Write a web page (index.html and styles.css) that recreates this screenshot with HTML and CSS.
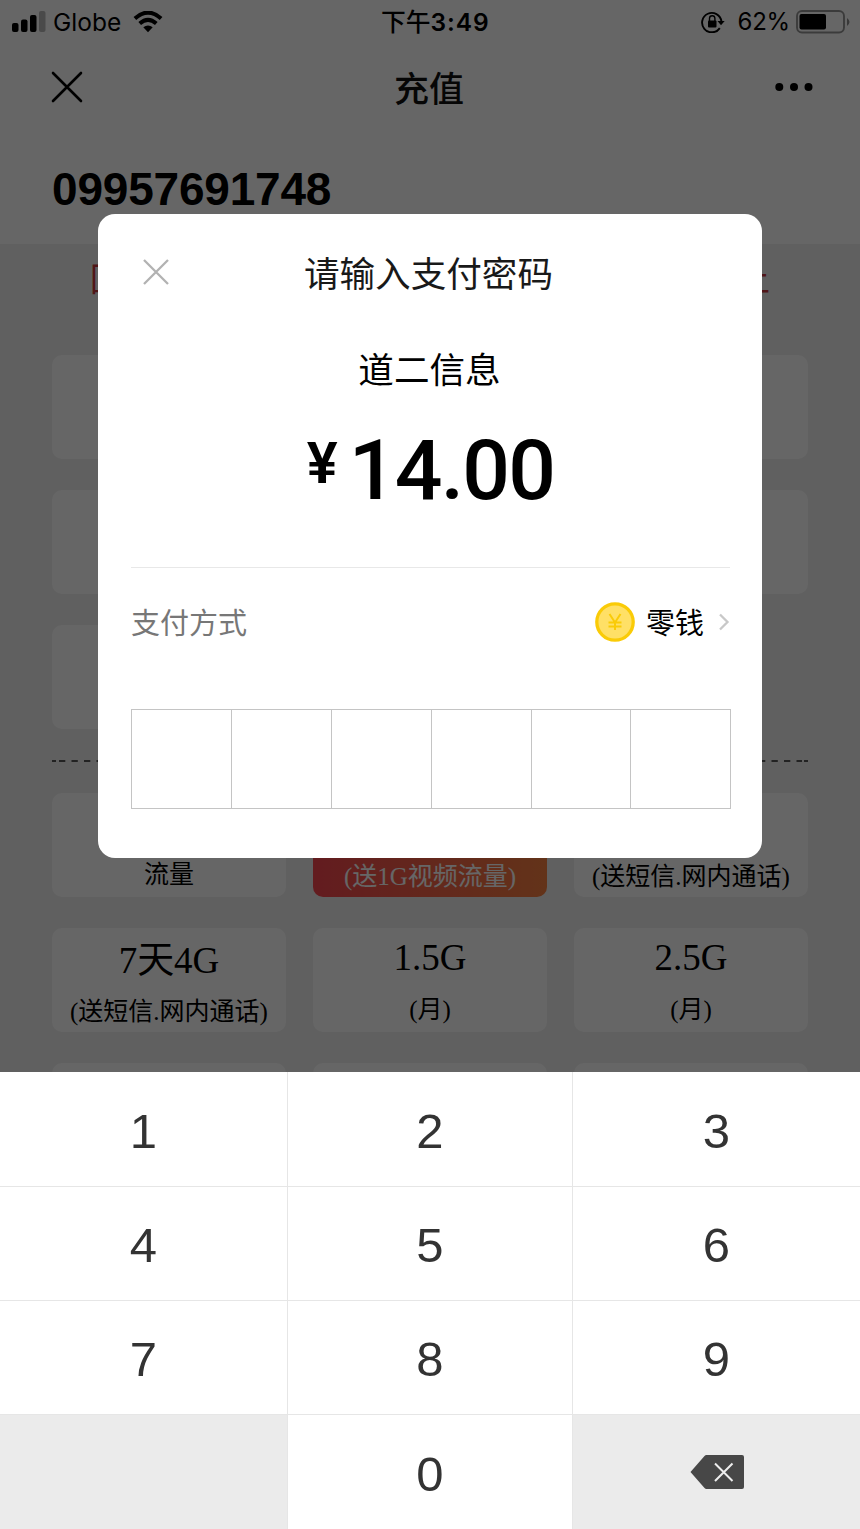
FILE: index.html
```html
<!DOCTYPE html>
<html lang="zh-CN">
<head>
<meta charset="utf-8">
<title>充值</title>
<link rel="stylesheet" href="styles.css">
</head>
<body>
<div class="screen">
  <div class="page">
    <header class="top">
      <div class="status">
        <div class="status-left">
          <svg width="34" height="22" viewBox="0 0 34 22"><rect x="0" y="12" width="6.5" height="9" rx="2"/><rect x="9" y="8.500" width="6.500" height="12.500" rx="2"/><rect x="18" y="4" width="6.500" height="17" rx="2"/><rect x="27" y="0" width="6.500" height="21" rx="2" opacity=".28"/></svg>
          <span class="carrier">Globe</span>
          <svg width="30" height="22" viewBox="0 0 30 22"><g fill="none" stroke="#000" stroke-width="4"><path d="M1.900 7.400Q15-4.200 28.100 7.400"/><path d="M6.700 12.600Q15 5.300 23.300 12.600"/></g><path d="M10.300 16.200Q15 12.800 19.700 16.200L15 21.300Z"/></svg>
        </div>
        <div class="clock">下午<b>3:49</b></div>
        <div class="status-right">
          <svg width="24" height="22" viewBox="0 0 24 22"><path d="M18.800 17.100A9.700 9.700 0 1 1 20.400 10.200" fill="none" stroke="#000" stroke-width="1.900"/><path d="M16.500 10h7.200L20 14.200Z"/><rect x="7" y="9.500" width="8.500" height="7" rx="1"/><path d="M8.500 10V7.500a2.700 2.700 0 0 1 5.400 0V10" fill="none" stroke="#000" stroke-width="1.400"/></svg>
          <span class="percent">62%</span>
          <svg class="battery" width="54" height="24" viewBox="0 0 54 24"><rect x="1" y="1" width="47" height="21.500" rx="5" fill="none" stroke="#000" stroke-opacity=".42" stroke-width="1.900"/><rect x="3.500" y="4" width="26.500" height="15.500" rx="2"/><path d="M51 8q5 4 0 8z" opacity=".45"/></svg>
        </div>
      </div>
      <nav class="nav">
        <svg width="32" height="32" viewBox="0 0 32 32"><path d="M2 2 30 30M30 2 2 30" stroke="#000" stroke-width="2.600" stroke-linecap="round"/></svg>
        <h1 class="nav-title">充值</h1>
        <svg width="38" height="10" viewBox="0 0 38 10"><circle cx="4.300" cy="5" r="4"/><circle cx="19" cy="5" r="4"/><circle cx="33.500" cy="5" r="4"/></svg>
      </nav>
      <div class="phone">09957691748</div>
    </header>
    <main class="plans">
      <div class="notice"><span>回</span><span>上</span></div>
      <div class="grid">
        <div class="card"></div><div class="card"></div><div class="card"></div>
        <div class="card"></div><div class="card"></div><div class="card"></div>
        <div class="card"></div><div class="card"></div>
      </div>
      <svg class="dash" width="756" height="2" viewBox="0 0 756 2"><path d="M0 1H4M752 1H756" stroke="#555" stroke-width="2"/><path d="M7 1H750" stroke="#555" stroke-width="2" stroke-dasharray="6.300 6.200"/></svg>
      <div class="grid">
        <div class="card low"><div class="sub">流量</div></div>
        <div class="card low hot"><div class="sub">(送1G视频流量)</div></div>
        <div class="card low"><div class="sub">(送短信.网内通话)</div></div>
        <div class="card cjk"><div class="name">7天4G</div><div class="sub">(送短信.网内通话)</div></div>
        <div class="card"><div class="name">1.5G</div><div class="sub">(月)</div></div>
        <div class="card"><div class="name">2.5G</div><div class="sub">(月)</div></div>
        <div class="card"></div><div class="card"></div><div class="card"></div>
      </div>
    </main>
  </div>
  <div class="mask"></div>
  <section class="dialog">
    <div class="dialog-head">
      <svg width="26" height="26" viewBox="0 0 26 26"><path d="M1 1 25 25M25 1 1 25" stroke="#b2b2b2" stroke-width="2.300"/></svg>
      <h2 class="dialog-title">请输入支付密码</h2>
    </div>
    <div class="payee">道二信息</div>
    <div class="amount"><span class="yen">¥</span><span class="sum">14.00</span></div>
    <div class="method">
      <span class="method-label">支付方式</span>
      <svg width="40" height="40" viewBox="0 0 40 40"><circle cx="20" cy="20" r="18.200" fill="#ffe066" stroke="#facb07" stroke-width="3.300"/><path d="M14.500 12 20 20.500 25.500 12M20 20.500V28M13.500 20.500H26.500M13.500 24.500H26.500" fill="none" stroke="#facb07" stroke-width="2"/></svg>
      <span class="method-name">零钱</span>
      <svg width="12" height="18" viewBox="0 0 12 18"><path d="M2 1.500 9.500 9 2 16.500" fill="none" stroke="#c8c8c8" stroke-width="2.300"/></svg>
    </div>
    <div class="pin"><i></i><i></i><i></i><i></i><i></i><i></i></div>
  </section>
  <div class="keypad">
    <div>1</div><div>2</div><div>3</div>
    <div>4</div><div>5</div><div>6</div>
    <div>7</div><div>8</div><div>9</div>
    <div class="gray"></div><div>0</div>
    <div class="gray"><svg width="54" height="34" viewBox="0 0 54 34"><path d="M.5 17 14.500 1Q15.300 0 16.500 0H52Q54 0 54 2V32Q54 34 52 34H16.500Q15.300 34 14.500 33Z" fill="#474747"/><path d="M25 8.500 42.500 26M42.500 8.500 25 26" stroke="#eee" stroke-width="2"/></svg></div>
  </div>
</div>
</body>
</html>
```
FILE: styles.css
```css
* { box-sizing: border-box; }
body { margin: 0; font-family: "Liberation Sans", "Noto Sans CJK SC", sans-serif; color: #000; }
svg { display: block; flex: none; }
h1, h2 { margin: 0; font-weight: 400; }
.screen { position: relative; width: 860px; height: 1529px; overflow: hidden; background: #f0f0f0; }
.top { height: 244px; background: #fff; }
.status { height: 44px; padding: 0 0 0 12px; display: grid; grid-template-columns: 369px 1fr 300px; align-items: center; font: 25px/44px Inter, "Noto Sans CJK SC", sans-serif; }
.status-left, .status-right { display: flex; align-items: center; height: 42px; }
.carrier { width: 80px; padding: 0 0 1px 7px; font-size: 24.500px; line-height: 42px; margin-right: 7px; }
.status-right { justify-content: flex-end; }
.percent { margin: 0 6px 0 13px; font-size: 24px; letter-spacing: -.2px; line-height: 42px; }
.battery { margin: 0 10px 1px 0; }
.clock { font-weight: 500; font-size: 24.800px; white-space: nowrap; }
.clock b { font-weight: 600; font-size: 24.500px; letter-spacing: .9px; }
.nav { height: 86px; padding: 0 47px 0 51px; display: flex; align-items: center; justify-content: space-between; }
.nav-title { font: 500 35px/84px "Noto Sans CJK SC", sans-serif; color: #111; }
.phone { padding: 31px 52px 0; font-weight: 700; font-size: 46px; letter-spacing: -.2px; line-height: 56px; }
.notice { height: 110.500px; padding: 11px 90px 0; display: flex; justify-content: space-between; color: #c8373c; font: 33px/44px "Noto Sans CJK SC", sans-serif; }
.grid { padding: 0 52px; display: grid; grid-template-columns: repeat(3, 234px); justify-content: space-between; row-gap: 31px; grid-auto-rows: 104px; }
.card { border-radius: 10px; background: #fff; text-align: center; font-family: "Liberation Serif", "Noto Sans CJK SC", serif; white-space: nowrap; }
.name { height: 63px; font-size: 37px; line-height: 60px; }
.sub { font-size: 25px; line-height: 38px; }
.cjk .name { height: 65px; line-height: 66px; }
.low .sub { padding-top: 65px; }
.low:first-child .sub { padding-top: 63px; }
.hot { background: linear-gradient(90deg, #f8464f, #f88040); color: #fff; }
.dash { margin: 31px 52px 31px; }
.mask { position: absolute; inset: 0; background: rgba(0,0,0,.6); }
.dialog { position: absolute; left: 98px; top: 214px; width: 664px; height: 644px; border-radius: 17px; padding: 31px 32px 0 33px; background: #fff; font-family: "Noto Sans CJK SC", sans-serif; }
.dialog-head { display: grid; grid-template-columns: 36px 1fr 40px; align-items: center; height: 54px; }
.dialog-head svg { margin-left: 12px; }
.dialog-title { font-size: 35.600px; line-height: 54px; text-align: center; color: #191919; }
.payee { margin: 42px 2px 0 0; text-align: center; font-size: 35.600px; line-height: 54px; }
.amount { height: 173px; padding: 26px 0 0; display: flex; justify-content: center; align-items: flex-start; border-bottom: 1px solid #e8e8e8; font-family: Roboto, sans-serif; font-weight: 500; }
.yen { font-size: 58px; line-height: 84px; margin-right: 11px; font-weight: 600; }
.sum { font-size: 84px; line-height: 100px; letter-spacing: -1.800px; }
.method { display: flex; align-items: center; height: 108px; font-size: 29px; }
.method-label { flex: 1; color: #777; }
.method-label, .method-name { padding-bottom: 2px; }
.method-name { margin: 0 14px 0 11px; }
.pin { margin-top: 33px; display: grid; grid-template-columns: repeat(3, 100px) 99.700px 99.700px 100.600px; height: 100px; width: 600px; border: solid #c4c4c4; border-width: 1px 0; }
.pin i { border-left: 1px solid #c4c4c4; }
.pin i:last-child { border-right: 1px solid #c4c4c4; }
.keypad { position: absolute; left: 0; top: 1072px; width: 860px; height: 457px; display: grid; grid-template-columns: 287px 285px 288px; grid-template-rows: 114px 114px 114px 115px; background: #fff; color: #333; font-size: 49px; }
.keypad div { display: flex; align-items: center; justify-content: center; padding-top: 3px; border-top: 1px solid #e6e6e6; border-left: 1px solid #e6e6e6; }
.keypad div:nth-child(3n+1) { border-left: 0; }
.keypad div:nth-child(-n+3) { border-top: 0; }
.keypad .gray { background: #ebebeb; padding-top: 0; }
```
